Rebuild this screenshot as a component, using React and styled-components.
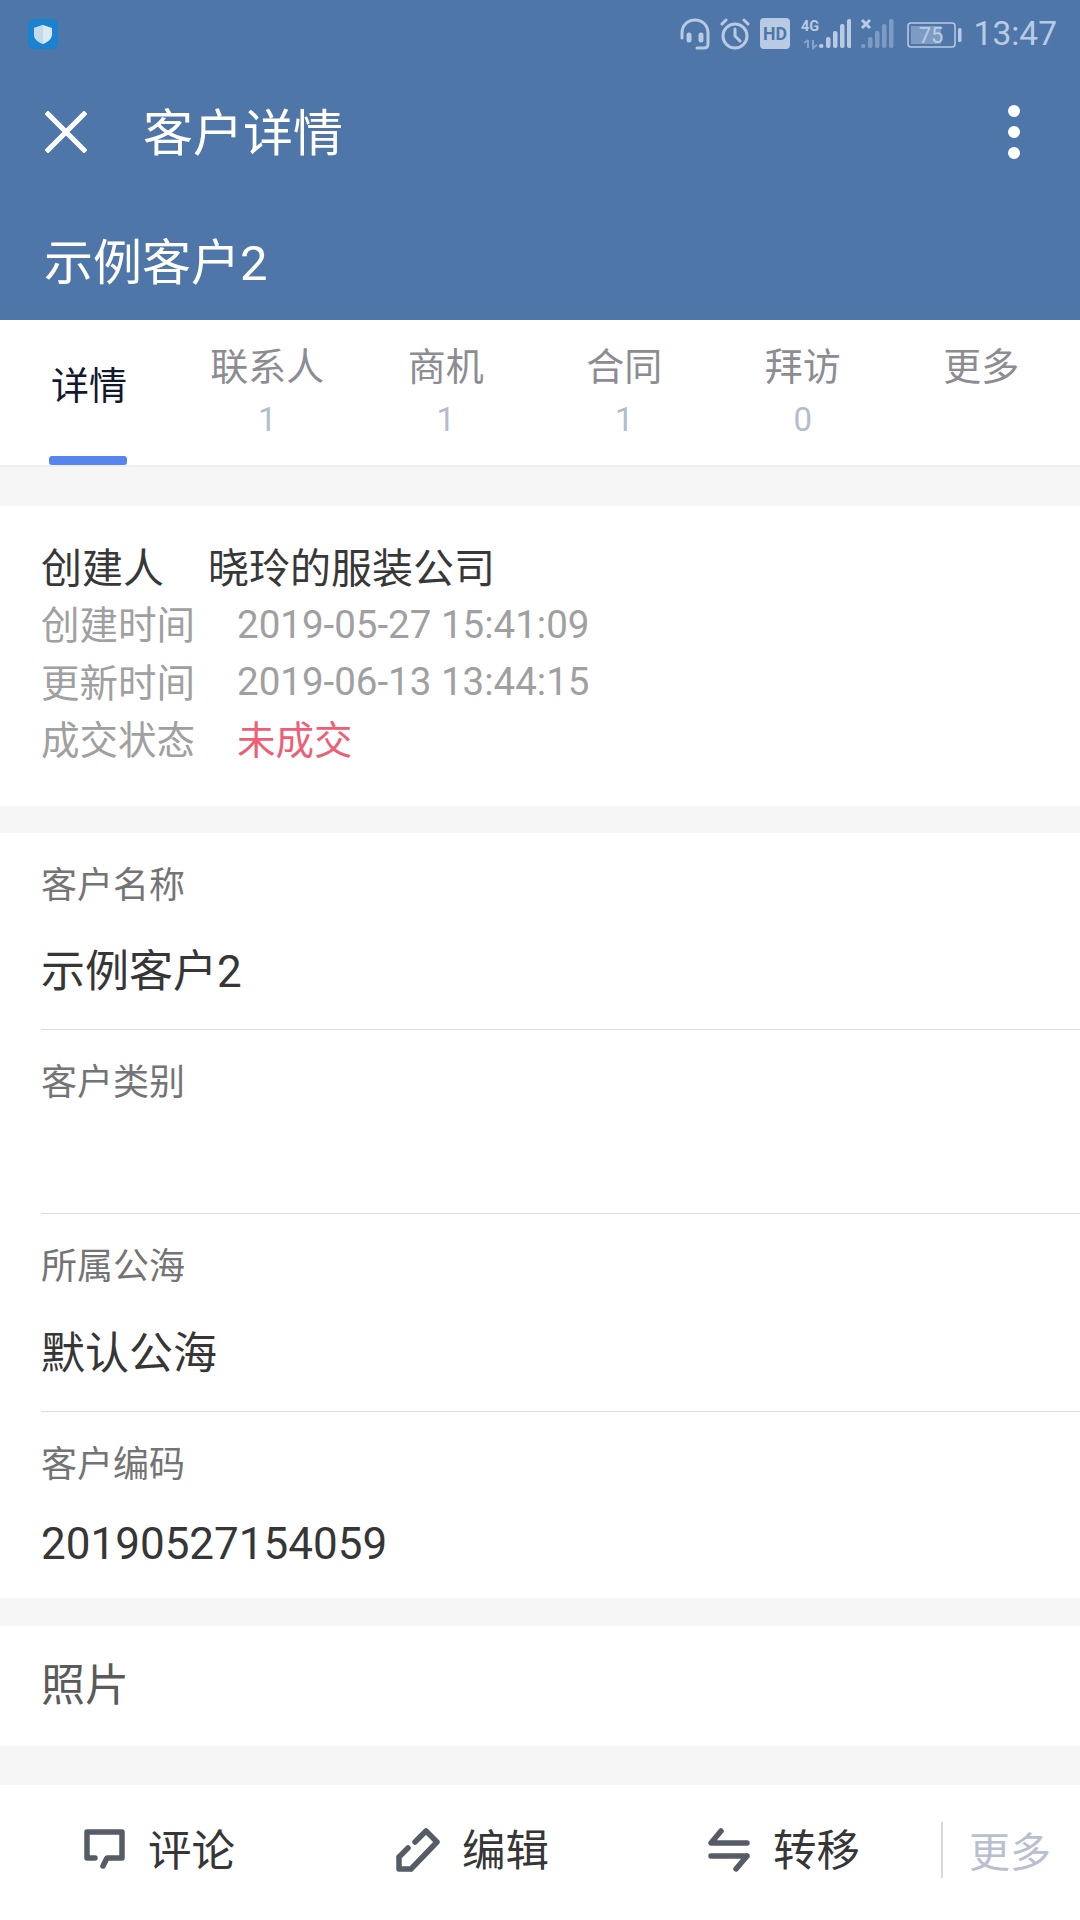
import React from 'react';
import styled, { createGlobalStyle } from 'styled-components';

const GlobalStyle = createGlobalStyle`
  html, body { margin: 0; padding: 0; background: #fff; }
  body { font-family: Roboto, "Noto Sans CJK SC", sans-serif; }
  * { box-sizing: border-box; }
`;

const Page = styled.div`
  width: 1080px;
  height: 1920px;
  display: flex;
  flex-direction: column;
  overflow: hidden;
  background: #f6f6f6;
`;

// blue top area: status bar, toolbar, customer name
const Header = styled.header`
  height: 320px;
  background: #4f76a9;
  color: #fff;
  display: flex;
  flex-direction: column;
`;

const StatusBar = styled.div`
  height: 66px;
  padding: 1px 23px 0 28px;
  display: flex;
  align-items: center;
  justify-content: space-between;
`;

const StatusIcons = styled.div`
  display: flex;
  align-items: center;
  gap: 9px;
  color: #b9cbe2;
`;

const Clock = styled.span`
  font-size: 33.5px;
  line-height: 66px;
  margin-left: 3px;
`;

const Toolbar = styled.div`
  height: 66px;
  margin-top: 33px;
  padding: 0 60px 0 45px;
  display: flex;
  align-items: center;
  justify-content: space-between;
`;

const ToolbarLeft = styled.div`
  display: flex;
  align-items: center;
  gap: 56px;
`;

const Title = styled.h1`
  margin: 4px 0 0;
  font-size: 50px;
  font-weight: 400;
  line-height: 66px;
`;

const Dots = styled.div`
  width: 12px;
  display: flex;
  flex-direction: column;
  gap: 9px;

  i {
    display: block;
    width: 12px;
    height: 12px;
    border-radius: 50%;
    background: #fff;
  }
`;

const CustomerName = styled.div`
  margin-top: 66px;
  padding-left: 44px;
  font-size: 49px;
  line-height: 66px;
`;

const Tabs = styled.nav`
  height: 147px;
  background: #fff;
  display: flex;
  border-bottom: 2px solid #efefef;
`;

const Tab = styled.div`
  position: relative;
  width: 178.5px;
  padding-top: ${p => (p.$active ? '41px' : '22px')};
  display: flex;
  flex-direction: column;
  align-items: center;
  color: ${p => (p.$active ? '#12192e' : '#8c8c92')};
  font-size: 38px;
  line-height: 50px;

  &:first-child { width: 178px; }
`;

const TabCount = styled.span`
  margin-top: 4px;
  font-size: 33px;
  line-height: 48px;
  color: #b4bdcc;
`;

const TabMark = styled.span`
  position: absolute;
  left: 49px;
  bottom: 0;
  width: 78px;
  height: 9px;
  border-radius: 3px;
  background: #5585ee;
`;

const Card = styled.section`
  background: #fff;
  margin-top: ${p => p.$gap}px;
`;

const InfoCard = styled(Card)`
  height: 300px;
  padding: 30px 0 0 41px;
`;

const InfoRow = styled.div`
  display: flex;
  height: 57.5px;
  align-items: center;
  color: ${p => (p.$dark ? '#383838' : '#a0a0a0')};
`;

const InfoLabel = styled.span`
  width: ${p => (p.$narrow ? '167px' : '196px')};
  font-size: ${p => (p.$narrow ? '41px' : '38.5px')};
`;

const InfoValue = styled.span`
  font-size: ${p => (p.$big ? '41px' : '38.5px')};
  color: ${p => p.$color || 'inherit'};
`;

// digits sit a little lower than the label next to them
const DateValue = styled(InfoValue)`
  margin-top: 4px;
`;

const Field = styled.div`
  height: ${p => p.$h}px;
  margin-left: 41px;
  padding-top: 28px;
  border-bottom: ${p => (p.$last ? 'none' : '1px solid #dedede')};
`;

const FieldLabel = styled.div`
  font-size: 36px;
  line-height: 50px;
  color: #747474;
`;

const FieldValue = styled.div`
  margin-top: ${p => p.$mt}px;
  font-size: 44px;
  line-height: 60px;
  color: #363636;
`;

const PhotoCard = styled(Card)`
  height: 120px;
  padding: 0 0 9px 41px;
  display: flex;
  align-items: center;
  font-size: 44px;
  color: #5a5a5a;
`;

const Footer = styled.footer`
  margin-top: 39px;
  flex: 1;
  padding-bottom: 6px;
  background: #fff;
  display: flex;
  align-items: center;
`;

const Action = styled.div`
  width: ${p => p.$w}px;
  padding-left: ${p => p.$pl}px;
  display: flex;
  align-items: center;
  gap: 22px;
  font-size: 43.5px;
  color: #363636;
`;

const ActionLabel = styled.span`
  margin-bottom: 4px;
`;

const MoreButton = styled.div`
  height: 56px;
  padding: 0 0 2px 26px;
  border-left: 2px solid #d4d9e2;
  display: flex;
  align-items: center;
  font-size: 41px;
  color: #b9c0cd;
`;

const CloseIcon = () => (
  <svg width="42" height="42" viewBox="0 0 42 42" fill="none" stroke="#fff" strokeWidth="5" strokeLinecap="square">
    <path d="M3 3 L39 39 M39 3 L3 39" />
  </svg>
);

const ShieldIcon = () => (
  <svg width="30" height="30" viewBox="0 0 30 30">
    <rect width="30" height="30" rx="6" fill="#1a82cf" />
    <path d="M15 6 L24 9 V15 C24 20 20 23 15 25 C10 23 6 20 6 15 V9 Z" fill="#dbe9f5" />
    <path d="M15 6 L6 9 V15 C6 20 10 23 15 25 Z" fill="#c4d9ec" />
  </svg>
);

const HeadsetIcon = () => (
  <svg width="30" height="32" viewBox="0 0 30 32" fill="none" stroke="currentColor" strokeWidth="3" strokeLinecap="round">
    <path d="M2 20 V15 C2 7 8 2 15 2 C22 2 28 7 28 15 V26 C28 29 26 30 24 30 H17" />
    <path d="M9 17 V22 M21 17 V22" strokeWidth="5" />
  </svg>
);

const AlarmIcon = () => (
  <svg width="32" height="32" viewBox="0 0 32 32" fill="none" stroke="currentColor" strokeWidth="3" strokeLinecap="round">
    <circle cx="16" cy="18" r="12" />
    <path d="M16 11 V18 L21 23 M3 6 L7 2 M29 6 L25 2" />
  </svg>
);

const HdIcon = () => (
  <svg width="30" height="31" viewBox="0 0 30 31">
    <rect width="30" height="31" rx="4" fill="currentColor" />
    <text x="15" y="22" textAnchor="middle" fontSize="19" fontWeight="700" textLength="24" lengthAdjust="spacingAndGlyphs" fontFamily="Roboto, sans-serif" fill="#4f76a9">HD</text>
  </svg>
);

const bars = [
  { h: 4 }, { h: 11 }, { h: 17 }, { h: 24 }, { h: 29 },
];

const SignalFour = () => (
  <svg width="52" height="32" viewBox="0 0 52 32" fill="currentColor">
    <text x="2" y="13" fontSize="15" fontWeight="700" textLength="18" lengthAdjust="spacingAndGlyphs" fontFamily="Roboto, sans-serif">4G</text>
    <path d="M9 22 V30 M5 25 L9 22 M14 22 V30 L18 27" fill="none" stroke="currentColor" strokeWidth="2" opacity="0.55" />
    {bars.map((b, i) => (
      <rect key={i} x={20 + i * 7} y={30 - b.h} width="4.5" height={b.h} rx="2" />
    ))}
  </svg>
);

const SignalEmpty = () => (
  <svg width="34" height="32" viewBox="0 0 34 32" fill="currentColor">
    <path d="M2 2 L10 10 M10 2 L2 10" stroke="currentColor" strokeWidth="3" />
    {bars.map((b, i) => (
      <rect key={i} x={1 + i * 7} y={30 - b.h} width="4.5" height={b.h} rx="2" opacity={0.45} />
    ))}
  </svg>
);

const BatteryIcon = () => (
  <svg width="59" height="28" viewBox="0 0 59 28">
    <rect x="5" y="3" width="47" height="24" rx="3" fill="none" stroke="currentColor" strokeWidth="1.5" />
    <rect x="8" y="6" width="30" height="18" fill="currentColor" opacity="0.45" />
    <rect x="55" y="8" width="3.5" height="14" rx="1.5" fill="currentColor" />
    <text x="28" y="23" textAnchor="middle" fontSize="22" fill="currentColor" fontFamily="Roboto, sans-serif">75</text>
  </svg>
);

const CommentIcon = () => (
  <svg width="44" height="44" viewBox="0 0 44 44" fill="none" stroke="#555c66" strokeWidth="5.5" strokeLinecap="round" strokeLinejoin="round">
    <path d="M13 30 H5 V4 H40 V30 H25 L21 38" />
  </svg>
);

const EditIcon = () => (
  <svg width="44" height="44" viewBox="0 0 44 44" fill="none" stroke="#555c66" strokeWidth="5.5" strokeLinecap="round" strokeLinejoin="round">
    <path d="M3 29 V41 H15 M3 29 L12 20 M15 41 L41 14 L30 3 L19 14" />
  </svg>
);

const TransferIcon = () => (
  <svg width="44" height="44" viewBox="0 0 44 44" fill="none" stroke="#555c66" strokeWidth="5.5" strokeLinecap="round" strokeLinejoin="round">
    <path d="M14 3 L4 15 H40 M40 28 H4 M40 28 L29 41" />
  </svg>
);

const tabs = [
  { name: '联系人', count: 1 },
  { name: '商机', count: 1 },
  { name: '合同', count: 1 },
  { name: '拜访', count: 0 },
  { name: '更多' },
];

export default function App() {
  return (
    <Page>
      <GlobalStyle />
      <Header>
        <StatusBar>
          <ShieldIcon />
          <StatusIcons>
            <HeadsetIcon />
            <AlarmIcon />
            <HdIcon />
            <SignalFour />
            <SignalEmpty />
            <BatteryIcon />
            <Clock>13:47</Clock>
          </StatusIcons>
        </StatusBar>
        <Toolbar>
          <ToolbarLeft>
            <CloseIcon />
            <Title>客户详情</Title>
          </ToolbarLeft>
          <Dots><i /><i /><i /></Dots>
        </Toolbar>
        <CustomerName>示例客户2</CustomerName>
      </Header>

      <Tabs>
        <Tab $active>
          详情
          <TabMark />
        </Tab>
        {tabs.map(t => (
          <Tab key={t.name}>
            {t.name}
            {t.count !== undefined && <TabCount>{t.count}</TabCount>}
          </Tab>
        ))}
      </Tabs>

      <InfoCard $gap={39}>
        <InfoRow $dark>
          <InfoLabel $narrow>创建人</InfoLabel>
          <InfoValue $big>晓玲的服装公司</InfoValue>
        </InfoRow>
        <InfoRow>
          <InfoLabel>创建时间</InfoLabel>
          <DateValue>2019-05-27 15:41:09</DateValue>
        </InfoRow>
        <InfoRow>
          <InfoLabel>更新时间</InfoLabel>
          <DateValue>2019-06-13 13:44:15</DateValue>
        </InfoRow>
        <InfoRow>
          <InfoLabel>成交状态</InfoLabel>
          <InfoValue $color="#ee5f75">未成交</InfoValue>
        </InfoRow>
      </InfoCard>

      <Card $gap={27}>
        <Field $h={197}>
          <FieldLabel>客户名称</FieldLabel>
          <FieldValue $mt={31}>示例客户2</FieldValue>
        </Field>
        <Field $h={184}>
          <FieldLabel>客户类别</FieldLabel>
        </Field>
        <Field $h={198}>
          <FieldLabel>所属公海</FieldLabel>
          <FieldValue $mt={32}>默认公海</FieldValue>
        </Field>
        <Field $h={186} $last>
          <FieldLabel>客户编码</FieldLabel>
          <FieldValue $mt={24}>20190527154059</FieldValue>
        </Field>
      </Card>

      <PhotoCard $gap={28}>照片</PhotoCard>

      <Footer>
        <Action $w={313} $pl={82}><CommentIcon /><ActionLabel>评论</ActionLabel></Action>
        <Action $w={312} $pl={83}><EditIcon /><ActionLabel>编辑</ActionLabel></Action>
        <Action $w={316} $pl={82}><TransferIcon /><ActionLabel>转移</ActionLabel></Action>
        <MoreButton>更多</MoreButton>
      </Footer>
    </Page>
  );
}
